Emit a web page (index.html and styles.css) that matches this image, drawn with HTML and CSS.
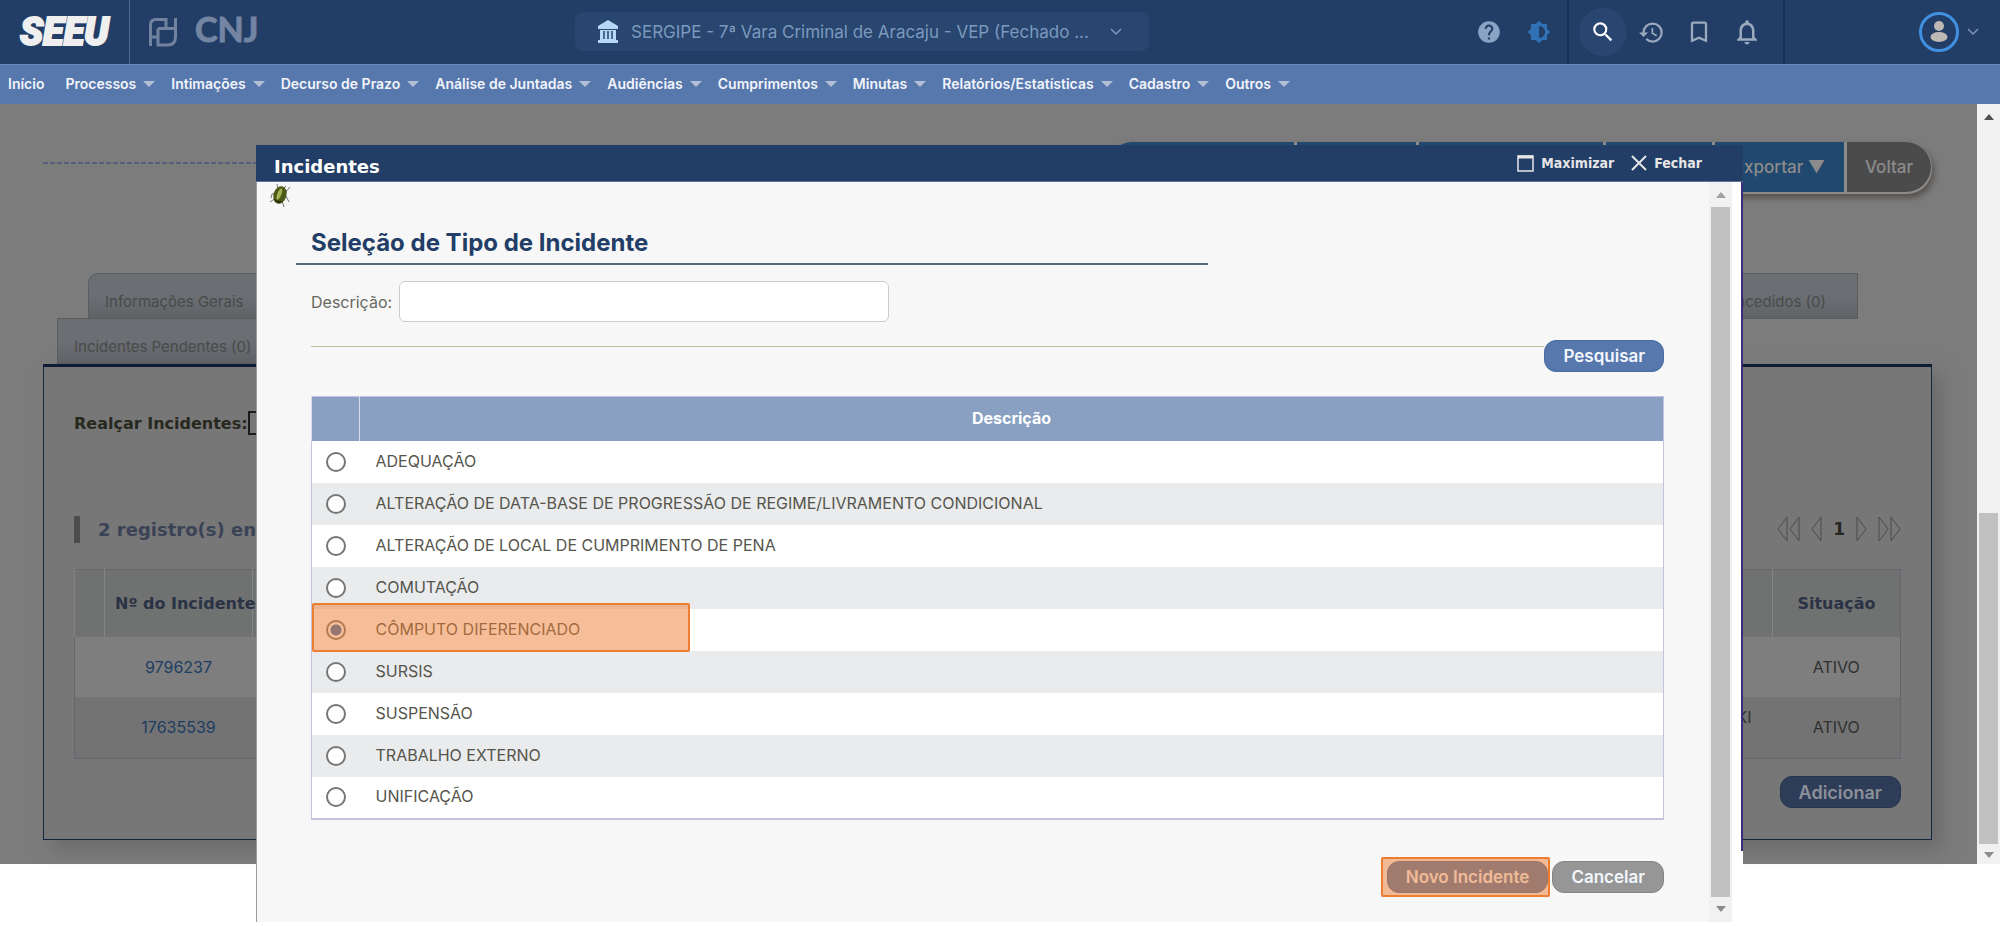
FILE: index.html
```html
<!DOCTYPE html>
<html lang="pt-BR">
<head>
<meta charset="utf-8">
<title>SEEU - Incidentes</title>
<link rel="stylesheet" href="styles.css">
</head>
<body>
<header class="topbar">
  <a class="brand" href="#">SEEU</a>
  <div class="org">
    <svg class="org-mark" viewBox="0 0 30 30" fill="none" stroke="currentColor" stroke-width="3"><path d="M2.500 29V8q0-5.500 5.500-5.500h10v9h9.500V1M2.500 20h7.500M10 11.500v8.500M10 20v8h9.500q8 0 8-8v-8.500M18 11.500h-8"/></svg>
    <span class="org-name">CNJ</span>
  </div>
  <button class="court" type="button">
    <svg width="22" height="24" viewBox="0 0 22 24" fill="currentColor"><path d="M11 0l10 6v3H1V6zM3 10h16v10H3zM1 20h20v3H1z"/><path d="M7 11v8M11 11v8M15 11v8" stroke="#28466f" stroke-width="1.500"/></svg>
    <span class="court-name">SERGIPE - 7ª Vara Criminal de Aracaju - VEP (Fechado ...</span>
    <svg width="12" height="8" viewBox="0 0 12 8" fill="none" stroke="currentColor" stroke-width="1.500"><path d="M1 1l5 5 5-5"/></svg>
  </button>
  <div class="tools tools-a">
    <button type="button" class="ic help" aria-label="Ajuda"><svg width="26" height="26" viewBox="0 0 24 24" fill="currentColor"><path d="M12 2C6.480 2 2 6.480 2 12s4.480 10 10 10 10-4.480 10-10S17.520 2 12 2zm1 17h-2v-2h2v2zm2.070-7.750l-.9.920C13.450 12.900 13 13.500 13 15h-2v-.5c0-1.100.45-2.100 1.170-2.830l1.240-1.260c.37-.36.590-.86.590-1.410 0-1.100-.9-2-2-2s-2 .9-2 2H8c0-2.210 1.790-4 4-4s4 1.790 4 4c0 .88-.36 1.680-.93 2.250z"/></svg></button>
    <button type="button" class="ic contrast" aria-label="Contraste"><svg width="24" height="24" viewBox="0 0 24 24" fill="currentColor"><path d="M20 15.310L23.310 12 20 8.690V4h-4.690L12 .69 8.690 4H4v4.690L.69 12 4 15.310V20h4.690L12 23.310 15.310 20H20v-4.690zM12 18V6c3.310 0 6 2.690 6 6s-2.690 6-6 6z"/></svg></button>
  </div>
  <div class="tools tools-b">
    <button type="button" class="ic search" aria-label="Buscar"><svg width="26" height="26" viewBox="0 0 24 24" fill="currentColor"><path d="M15.500 14h-.79l-.28-.27A6.471 6.471 0 0 0 16 9.500 6.500 6.500 0 1 0 9.500 16c1.610 0 3.090-.59 4.230-1.570l.27.280v.79l5 4.990L20.490 19l-4.990-5zm-6 0C7.010 14 5 11.990 5 9.500S7.010 5 9.500 5 14 7.010 14 9.500 11.990 14 9.500 14z"/></svg></button>
    <button type="button" class="ic" aria-label="Histórico"><svg width="27" height="27" viewBox="0 0 24 24" fill="currentColor"><path d="M13 3a9 9 0 0 0-9 9H1l3.890 3.890.07.140L9 12H6c0-3.870 3.130-7 7-7s7 3.130 7 7-3.130 7-7 7c-1.930 0-3.680-.79-4.940-2.060l-1.420 1.420A8.954 8.954 0 0 0 13 21a9 9 0 0 0 0-18zm-1 5v5l4.280 2.540.72-1.210-3.500-2.080V8H12z"/></svg></button>
    <button type="button" class="ic" aria-label="Favoritos"><svg width="28" height="28" viewBox="0 0 24 24" fill="currentColor"><path d="M17 3H7c-1.100 0-2 .9-2 2v16l7-3 7 3V5c0-1.100-.9-2-2-2zm0 15l-5-2.180L7 18V5h10v13z"/></svg></button>
    <button type="button" class="ic" aria-label="Notificações"><svg width="30" height="30" viewBox="0 0 24 24" fill="currentColor"><path d="M12 22c1.100 0 2-.9 2-2h-4c0 1.100.9 2 2 2zm6-6v-5c0-3.070-1.630-5.640-4.500-6.320V4a1.500 1.500 0 0 0-3 0v.68C7.640 5.360 6 7.920 6 11v5l-2 2v1h16v-1l-2-2zm-2 1H8v-6c0-2.480 1.510-4.500 4-4.500s4 2.020 4 4.500v6z"/></svg></button>
  </div>
  <button class="user" type="button" aria-label="Usuário">
    <span class="avatar"><svg width="18" height="22" viewBox="0 0 18 22" fill="#beb9b5"><circle cx="9" cy="5" r="5"/><ellipse cx="9" cy="16" rx="8.500" ry="5"/></svg></span>
    <svg width="12" height="8" viewBox="0 0 12 8" fill="none" stroke="#7f93b3" stroke-width="1.500"><path d="M1 1l5 5 5-5"/></svg>
  </button>
</header>
<nav class="menu">
  <a href="#">Início</a>
  <a class="drop" href="#">Processos</a>
  <a class="drop" href="#">Intimações</a>
  <a class="drop" href="#">Decurso de Prazo</a>
  <a class="drop" href="#">Análise de Juntadas</a>
  <a class="drop" href="#">Audiências</a>
  <a class="drop" href="#">Cumprimentos</a>
  <a class="drop" href="#">Minutas</a>
  <a class="drop" href="#">Relatórios/Estatísticas</a>
  <a class="drop" href="#">Cadastro</a>
  <a class="drop" href="#">Outros</a>
</nav>
<div class="page">
  <main class="content">
    <div class="actions">
      <span class="rule"></span>
      <div class="actions-group">
        <span class="act act-1"></span><span class="act act-2"></span><span class="act act-3"></span><span class="act act-4"></span>
        <button class="act act-export" type="button">Exportar ▼</button>
        <button class="act act-back" type="button">Voltar</button>
      </div>
    </div>
    <div class="tabs tabs-upper">
      <a class="tab" href="#">Informações Gerais</a>
      <a class="tab" href="#">Benefícios Concedidos (0)</a>
    </div>
    <div class="tabs tabs-lower"><a class="tab" href="#">Incidentes Pendentes (0)</a></div>
    <section class="panel">
      <label class="filter">Realçar Incidentes:<input type="text"></label>
      <div class="list-head">
        <h2 class="count">2 registro(s) encontrado(s)</h2>
        <div class="pager">
          <svg width="23" height="26" viewBox="0 0 23 26"><path d="M10 1L1 13l9 12zM22 1l-9 12 9 12z"/></svg>
          <svg width="11" height="26" viewBox="0 0 11 26"><path d="M10 1L1 13l9 12z"/></svg>
          <span>1</span>
          <svg width="11" height="26" viewBox="0 0 11 26"><path d="M1 1l9 12-9 12z"/></svg>
          <svg width="23" height="26" viewBox="0 0 23 26"><path d="M1 1l9 12-9 12zM13 1l9 12-9 12z"/></svg>
        </div>
      </div>
      <table class="list">
        <colgroup><col class="c-mark"><col class="c-num"><col><col class="c-sit"></colgroup>
        <thead><tr><th></th><th class="num-head">Nº do Incidente</th><th></th><th>Situação</th></tr></thead>
        <tbody>
          <tr><td></td><td><a href="#">9796237</a></td><td></td><td>ATIVO</td></tr>
          <tr><td></td><td><a href="#">17635539</a></td><td class="who">KI</td><td>ATIVO</td></tr>
        </tbody>
      </table>
      <div class="panel-foot"><button class="pill add" type="button">Adicionar</button></div>
    </section>
  </main>
  <div class="scroll scroll-page"><i class="up"></i><i class="thumb"></i><i class="down"></i></div>
</div>

<div class="modal" role="dialog" aria-labelledby="dlg">
  <div class="modal-head">
    <h1 id="dlg">Incidentes</h1>
    <button type="button"><svg width="17" height="17" viewBox="0 0 17 17" fill="none" stroke="currentColor"><path d="M1 1h15v15H1z" stroke-width="1.500"/><path d="M1 2h15" stroke-width="3"/></svg>Maximizar</button>
    <button type="button"><svg width="16" height="16" viewBox="0 0 16 16" fill="none" stroke="currentColor" stroke-width="2"><path d="M1 1l14 14M15 1L1 15"/></svg>Fechar</button>
  </div>
  <div class="modal-body">
    <div class="frame">
      <svg class="bug" width="22" height="24" viewBox="0 0 22 24"><path d="M9 7L8 0M14 5l3-3M16 9l5-6M17 12l3 6M13 17l2 6M6 9l-3 1-1 4M7 14l-6 4" fill="none" stroke="#77746e"/><ellipse cx="11" cy="11" rx="6.500" ry="9" transform="rotate(18 11 11)" fill="#4b5a16"/><ellipse cx="10" cy="10" rx="2" ry="6" transform="rotate(22 10 11)" fill="#a7b356"/><path d="M5 14q1 5 6 5l3-2q-6 1-9-3z" fill="#272a0b"/></svg>
      <h2 class="title">Seleção de Tipo de Incidente</h2>
      <div class="field"><label for="descr">Descrição:</label><input id="descr" type="text"></div>
      <div class="search-row"><span></span><button class="pill" type="button">Pesquisar</button></div>
      <table class="types">
        <colgroup><col class="c-radio"><col></colgroup>
        <thead><tr><th></th><th>Descrição</th></tr></thead>
        <tbody>
          <tr><td><input type="radio" name="t" id="t1"></td><td><label for="t1">ADEQUAÇÃO</label></td></tr>
          <tr><td><input type="radio" name="t" id="t2"></td><td><label for="t2">ALTERAÇÃO DE DATA-BASE DE PROGRESSÃO DE REGIME/LIVRAMENTO CONDICIONAL</label></td></tr>
          <tr><td><input type="radio" name="t" id="t3"></td><td><label for="t3">ALTERAÇÃO DE LOCAL DE CUMPRIMENTO DE PENA</label></td></tr>
          <tr><td><input type="radio" name="t" id="t4"></td><td><label for="t4">COMUTAÇÃO</label></td></tr>
          <tr><td class="marked"><input type="radio" name="t" id="t5" checked></td><td><label for="t5">CÔMPUTO DIFERENCIADO</label></td></tr>
          <tr><td><input type="radio" name="t" id="t6"></td><td><label for="t6">SURSIS</label></td></tr>
          <tr><td><input type="radio" name="t" id="t7"></td><td><label for="t7">SUSPENSÃO</label></td></tr>
          <tr><td><input type="radio" name="t" id="t8"></td><td><label for="t8">TRABALHO EXTERNO</label></td></tr>
          <tr><td><input type="radio" name="t" id="t9"></td><td><label for="t9">UNIFICAÇÃO</label></td></tr>
        </tbody>
      </table>
      <div class="modal-foot">
        <span class="spot"><button class="pill" type="button">Novo Incidente</button></span>
        <button class="pill grey" type="button">Cancelar</button>
      </div>
    </div>
    <div class="scroll scroll-modal"><i class="up"></i><i class="thumb"></i><i class="down"></i></div>
  </div>
</div>
</body>
</html>
```
FILE: styles.css
```css
*, *::before, *::after { box-sizing: border-box; }
body {
  margin: 0;
  position: relative;
  min-height: 100vh;
  overflow: hidden;
  background: #fff;
  font-family: Inter, "Liberation Sans", sans-serif;
  font-size: 16px;
}
button { border: 0; padding: 0; background: none; font: inherit; color: inherit; cursor: pointer; }
a { color: inherit; text-decoration: none; }
h1, h2 { margin: 0; }
svg { flex: none; display: block; }

.topbar { display: flex; align-items: center; height: 64px; background: #223d66; position: relative; }
.brand {
  width: 130px; height: 64px; line-height: 64px; padding-left: 20px;
  border-right: 1px solid #506b92;
  font-family: Roboto, sans-serif; font-size: 38px; font-weight: 900; font-style: italic;
  color: #efefef; -webkit-text-stroke: 2px #efefef;
}
.org { display: flex; align-items: center; gap: 17px; padding-left: 18px; color: #71839f; }
.org-mark { width: 30px; height: 30px; }
.org-name { height: 64px; line-height: 58px; font-family: Lato, sans-serif; font-size: 34px; font-weight: 700; color: #7385a2; -webkit-text-stroke: 1px #7385a2; }
.court {
  display: flex; align-items: center; width: 574px; height: 39px; padding: 0 27px 0 22px; gap: 12px;
  border-radius: 8px; background: #28466f; color: #7b9abe; font-size: 17px;
  position: absolute; left: 575px; top: 12px;
}
.court > svg:first-child { color: #b5d8f7; }
.court-name { flex: 1; text-align: left; white-space: nowrap; }
.tools { display: flex; align-items: center; height: 64px; }
.tools-a { margin-left: auto; border-right: 2px solid #1a3050; }
.tools-b { width: 216px; border-right: 2px solid #1a3050; padding-left: 10px; color: #9ba9bf; }
.ic { display: flex; align-items: center; justify-content: center; width: 48px; height: 48px; }
.help { color: #89a3c4; }
.contrast { color: #3071b5; margin: 0 4px 0 2px; }
.search { background: #28466f; border-radius: 50%; color: #fff; }
.user { display: flex; align-items: center; width: 215px; padding-right: 21px; gap: 8px; justify-content: flex-end; }
.avatar { width: 40px; height: 40px; border: 3px solid #4190e0; border-radius: 50%; display: flex; align-items: center; justify-content: center; }

.menu { display: flex; align-items: center; height: 40px; padding: 0 8px 2px; gap: 16px; background: #5778ad; border-top: 1px solid #6989b8; color: #f1f4fa; font-size: 14px; font-weight: 600; white-space: nowrap; }
.menu a:first-child { margin-right: 5px; }
.drop { display: flex; align-items: center; gap: 7px; }
.drop::after { content: ""; border: 6px solid transparent; border-top-color: #b3bfd6; border-bottom: 0; }

.page { display: flex; height: 760px; background: #7c7c7c; }
.content { flex: 1; min-width: 0; padding: 38px 45px 0 43px; }
.actions { display: flex; align-items: flex-start; }
.rule { flex: 1; margin-top: 20px; height: 2px; background: repeating-linear-gradient(90deg, #55607a 0 5px, transparent 5px 7px); }
.actions-group { display: flex; gap: 3px; height: 52px; padding-bottom: 2px; border-radius: 25px; background: #8c8c8c; box-shadow: 2px 4px 6px #55504d; }
.act { background: #21486e; color: #8b8b8b; font-size: 17px; font-weight: 500; }
.act-1 { width: 187px; border-radius: 25px 0 0 25px; }
.act-2 { width: 119px; }
.act-3 { width: 184px; }
.act-4 { width: 106px; }
.act-export { width: 129px; }
.act-back { width: 84px; background: #4b4b4b; border-radius: 0 25px 25px 0; margin-right: 1px; }

.tabs { display: flex; font-size: 15px; color: #4a4a4a; }
.tabs-upper { margin: 79px 74px 0 45px; }
.tabs-lower { margin: -1px 0 0 14px; }
.tab { height: 46px; padding: 9px 31px 0 16px; line-height: 38px; border: 1px solid #5b5c5e; background: linear-gradient(#6b6e73 50%, #5f6265); }
.tabs-upper .tab:first-child { flex: 1; border-right: 0; border-radius: 10px 0 0 0; }
.tabs-upper .tab:last-child { border-left: 0; }

.panel { border: 1px solid #14253f; border-top: 3px solid #0f1c35; height: 476px; padding: 44px 30px 0 30px; background: #777; box-shadow: 10px 10px 16px #6c6c6c; font-family: "DejaVu Sans", sans-serif; color: #262622; }
.filter { display: flex; align-items: center; height: 24px; font-size: 16px; font-weight: 700; white-space: nowrap; color: #272820; }
.filter input { width: 200px; height: 24px; border: 2px solid #1c1c1c; background: #777; }
.list-head { display: flex; align-items: center; justify-content: space-between; margin-top: 80px; height: 28px; }
.count { font-size: 18px; line-height: 27px; padding-left: 18px; border-left: 6px solid #4c4c4c; color: #3a4356; }
.pager { display: flex; align-items: center; gap: 11px; font-size: 17px; font-weight: 700; }
.pager svg { fill: none; stroke: #4d4d4d; }
.list { width: 100%; margin-top: 26px; table-layout: fixed; border-collapse: collapse; border: 1px solid #686573; font-family: Inter, sans-serif; }
.c-mark { width: 30px; }
.c-num { width: 148px; }
.c-sit { width: 128px; }
.list th { height: 67px; padding: 0; border-left: 1px solid #828583; background: #6f7270; font-family: "DejaVu Sans", sans-serif; font-size: 16px; white-space: nowrap; color: #2b3245; }
.list .num-head { text-align: left; padding-left: 10px; }
.list td { height: 60px; padding: 0; text-align: center; background: #7e7e7e; font-size: 16px; color: #303030; }
.list tr:last-child td { height: 62px; background: #737373; }
.list a { color: #1c3d62; }
.list td.who { padding: 0 21px 20px 0; text-align: right; }
.panel-foot { display: flex; justify-content: flex-end; margin-top: 17px; }

.pill { height: 32px; padding: 0 18px; border-radius: 12px; border: 1px solid #4a6b9f; background: #5778ad; color: #f3f6fb; font-family: Inter, sans-serif; font-size: 17px; font-weight: 600; white-space: nowrap; }
.pill.grey { background: #969696; border-color: #858585; }
.pill.add { background: #2d3d58; border-color: #26354f; color: #8c9099; font-size: 18px; }

.scroll { display: flex; flex-direction: column; align-items: center; width: 23px; background: #f1f1f1; }
.up, .down { width: 0; height: 0; border: 5px solid transparent; }
.up { border-top: 0; border-bottom: 6px solid #a0a0a0; }
.down { border-bottom: 0; border-top: 6px solid #8b8b8b; }
.thumb { width: 19px; background: #c1c1c1; }
.scroll-page { padding: 10px 0 6px; }
.scroll-page .up { border-bottom-color: #505050; }
.scroll-page .thumb { height: 331px; margin: auto 0 8px; }
.scroll-modal { padding: 10px 0; }
.scroll-modal .thumb { flex: 1; margin: 9px 0; }

.modal { position: absolute; left: 256px; right: 257px; top: 145px; bottom: 4px; display: flex; flex-direction: column; }
.modal-head { display: flex; align-items: center; gap: 17px; height: 37px; padding: 0 41px 0 18px; background: #223d66; border-bottom: 1px solid #5d7398; font-family: "DejaVu Sans", sans-serif; color: #e6e6e6; }
.modal-head h1 { flex: 1; padding-top: 6px; font-size: 18px; color: #fff; }
.modal-head button { display: flex; align-items: center; gap: 7px; font-size: 14px; font-weight: 700; font-family: "DejaVu Sans Condensed", "DejaVu Sans", sans-serif; }
.modal-body { flex: 1; display: flex; padding-right: 11px; border-left: 1px solid #9a9a9a; background: linear-gradient(#3c2a7d, #3c2a7d) right top / 2px 669px no-repeat #fff; }
.frame { flex: 1; padding: 2px 45px 0 54px; background: #f7f7f7; }
.bug { margin-left: -42px; }
.title { width: 912px; max-width: 100%; margin: 13px 0 0 -15px; padding-left: 15px; height: 44px; line-height: 44px; border-bottom: 2px solid #566b7d; font-size: 24px; font-weight: 700; color: #223d66; }
.field { display: flex; align-items: center; gap: 7px; margin-top: 16px; color: #686860; }
.field input { width: 490px; height: 41px; border: 1px solid #ccc; border-radius: 6px; background: #fff; }
.search-row { display: flex; align-items: flex-start; margin-top: 18px; }
.search-row span { flex: 1; margin-top: 6px; border-top: 1px solid #c4bf9c; }
.types { width: 100%; margin-top: 24px; table-layout: fixed; border-collapse: collapse; border: 1px solid #c6c1de; border-bottom-width: 2px; color: #55554c; }
.c-radio { width: 48px; }
.types th { height: 44px; padding: 0 0 2px; background: #89a0c3; color: #fff; font-size: 16px; font-weight: 700; border-left: 1px solid #d6deeb; }
.types td { height: 42px; padding: 0; }
.types td + td { padding-left: 16px; padding-bottom: 2px; }
.types tbody tr:nth-child(even) { background: #e9ebec; }
.types tbody tr:nth-child(odd) { background: #fff; }
.types input { appearance: none; display: block; width: 20px; height: 20px; margin: 0 auto; border: 2px solid #767676; border-radius: 50%; background: #fff; }
.types input:checked { background: radial-gradient(circle, #3d6db0 5px, #fff 6px); }
.marked { position: relative; }
.marked::after, .spot::after { content: ""; position: absolute; border: 2px solid #ed7d31; background: rgba(237, 125, 49, 0.5); border-radius: 2px; pointer-events: none; }
.marked::after { left: 0; top: -6px; width: 378px; height: 49px; }
.modal-foot { display: flex; justify-content: flex-end; gap: 4px; margin-top: 41px; }
.spot { position: relative; display: flex; }
.spot::after { inset: -4px -2px -4px -6px; }
```
